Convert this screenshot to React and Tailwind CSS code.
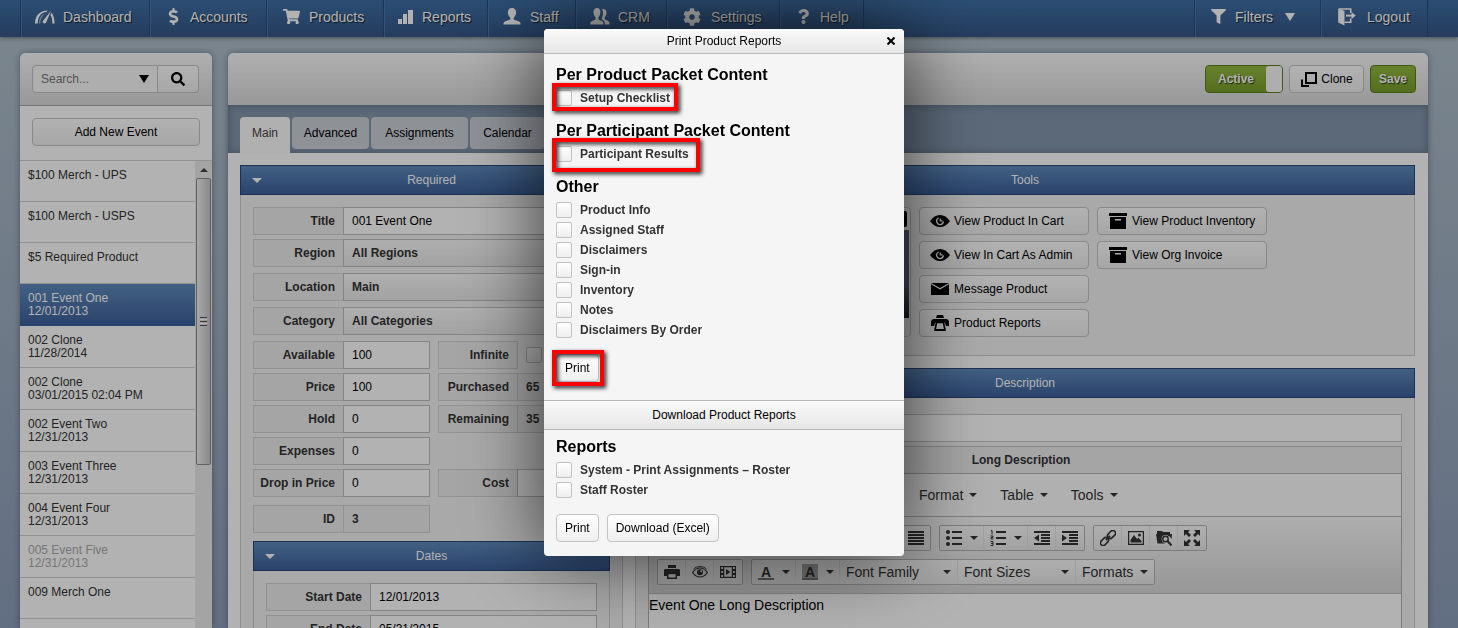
import React from "react";
import { FaDollarSign, FaShoppingCart, FaCog, FaQuestion, FaFilter, FaSearch } from "react-icons/fa";

/* ---------- icons ---------- */

const GaugeIcon = () => (
  <svg width="20" height="14" viewBox="0 0 20 14" fill="currentColor">
    <path d="M0 13.500C0 6 4.500.5 12.500.5l-.9 1.500C6 2.200 2.800 7 2.800 13.500z" />
    <path d="M4 13.500C4 8.500 6 5 9.200 4l-.8 1.400C6.500 7 5.400 9.800 5.400 13.500z" opacity="0.5" />
    <path d="M16 .8L8 10.800c-1.300 2 1.600 3.900 3 2 .4-.6.600-1.300.9-2z" />
    <path d="M16.500 2.800C18.600 5 19.600 9 19.600 13.500h-2.300C17.300 10 17 7 15.400 5z" />
  </svg>
);
const BarsIcon = () => (
  <svg width="16" height="16" viewBox="0 0 16 16" fill="currentColor">
    <rect x="0" y="10" width="4" height="5" />
    <rect x="5" y="5" width="4" height="10" />
    <rect x="10" y="1" width="5" height="14" />
  </svg>
);
const PersonIcon = () => (
  <svg width="18" height="17" viewBox="0 0 18 17" fill="currentColor">
    <path d="M9 0c2.800 0 4.200 1.900 4.100 4.500-.1 2.400-1.200 4.200-2.400 5.200v1.500c.5 1 5.300 1.600 6.300 3 .4.6.6 1.500.6 2.300H.4c0-.8.2-1.700.6-2.300 1-1.400 5.800-2 6.300-3V9.700C6.100 8.700 5 6.900 4.900 4.500 4.800 1.900 6.200 0 9 0z" />
  </svg>
);
const PeopleIcon = () => (
  <svg width="20" height="17" viewBox="0 0 20 17" fill="currentColor">
    <path d="M7 0c2.300 0 3.500 1.800 3.400 4.300-.1 2.200-.9 4-2 5v1.900c.6 1 4 1.500 4.700 2.900.3.600.4 1.500.4 2.300H.2c0-.8.1-1.700.5-2.300.7-1.300 4.100-2 4.800-2.900V9.300c-1.100-1-1.900-2.800-2-5C3.400 1.800 4.700 0 7 0z" />
    <path d="M12.300 1c2.700-.6 4.300 1.100 4.200 3.700-.1 2.100-.8 3.700-1.800 4.600v1.700c.5 1 3.700 1.600 4.400 2.900.3.600.5 1.700.5 2.500h-4.700c0-2-.5-3.400-1.800-4.100-.9-.5-1.200-.8-1.500-1.200v-.7c1.600-2 1.800-6.400.7-9.400z" />
  </svg>
);
const LogoutIcon = () => (
  <svg width="18" height="18" viewBox="0 0 18 18" fill="none" stroke="currentColor">
    <path d="M1 1h11.700v4M12.700 10.500v3.700H6.500" strokeWidth="1.600" />
    <path d="M.2.5l6.300 2.400V17.500L.2 14.500z" fill="currentColor" stroke="none" />
    <path d="M8 7.600h6.500" strokeWidth="2" />
    <path d="M13.500 4l4.200 3.600-4.200 3.600z" fill="currentColor" stroke="none" />
  </svg>
);
const CloneIcon = () => (
  <svg width="17" height="17" viewBox="0 0 17 17" fill="none" stroke="currentColor" strokeWidth="2">
    <rect x="6" y="2" width="10" height="10" />
    <path d="M2 8.500V15h7" />
  </svg>
);
const EyeIcon = () => (
  <svg width="20" height="12" viewBox="0 0 20 12">
    <path d="M0 6C3.200 2 6 0 10 0s6.800 2 10 6c-3.200 4-6 6-10 6S3.200 10 0 6z" fill="currentColor" />
    <path d="M8.700 3A3.400 3.400 0 1 0 13.400 6.400" fill="none" stroke="#f4f4f4" strokeWidth="1.300" />
    <path d="M10.300 3.500v2.300h2.200" fill="none" stroke="#f4f4f4" strokeWidth="1.200" />
  </svg>
);
const ArchiveIcon = () => (
  <svg width="18" height="16" viewBox="0 0 18 16" fill="currentColor">
    <path d="M0 0h18v3H0z" />
    <path fillRule="evenodd" d="M1 4h16v12H1zM6 6v1.500h6V6z" />
  </svg>
);
const MailIcon = () => (
  <svg width="18" height="12" viewBox="0 0 18 12" fill="currentColor">
    <path d="M0 0h18L9 5z" />
    <path d="M0 1.200l9 5.300 9-5.300V12H0z" />
  </svg>
);
const PrinterIcon = () => (
  <svg width="18" height="16" viewBox="0 0 18 16" fill="currentColor">
    <path d="M6 0h6l1 3H5z" />
    <path d="M2 4h14l2 2v5h-3L13.700 7.500H4.300L3 11H0V6z" />
    <path fillRule="evenodd" d="M4.800 7h8.400L15 16H3zM6.200 8.200L5.100 14h7.800l-1.100-5.800z" />
  </svg>
);
const Caret = ({ big }) =>
  big ? (
    <svg width="10" height="8" viewBox="0 0 10 8" fill="currentColor"><path d="M0 0h10L5 8z" /></svg>
  ) : (
    <svg width="8" height="4" viewBox="0 0 8 4" fill="currentColor"><path d="M0 0h8L4 4z" /></svg>
  );

const T = ({ children }) => (
  <svg width="16" height="16" viewBox="0 0 16 16" fill="currentColor" className="shrink-0">{children}</svg>
);
const lines = (d) => <path d={d} stroke="currentColor" strokeWidth="2" fill="none" />;
const tool = {
  undo: <T><path d="M6 1v3c6 0 9 3 9 10-2-4-4-5-9-5v3L0 6.500z" /></T>,
  redo: <T><path d="M10 1v3C4 4 1 7 1 14c2-4 4-5 9-5v3l6-5.500z" /></T>,
  bold: <b className="font-serif text-base">B</b>,
  italic: <i className="font-serif text-base">I</i>,
  underline: <u className="font-serif text-base">U</u>,
  left: <T>{lines("M0 2h16M0 5h10M0 8h16M0 11h10M0 14h16")}</T>,
  center: <T>{lines("M0 2h16M3 5h10M0 8h16M3 11h10M0 14h16")}</T>,
  right: <T>{lines("M0 2h16M6 5h10M0 8h16M6 11h10M0 14h16")}</T>,
  justify: <T>{lines("M0 2h16M0 5h16M0 8h16M0 11h16M0 14h16")}</T>,
  bullets: (
    <T>
      {lines("M6 2h10M6 8h10M6 14h10")}
      <circle cx="2" cy="2" r="2" /><circle cx="2" cy="8" r="2" /><circle cx="2" cy="14" r="2" />
    </T>
  ),
  numbers: (
    <T>
      {lines("M6 2h10M6 8h10M6 14h10")}
      <path d="M1 .5h1v4M.5 6h2.500v1.500h-2v1.500h2.500M.5 11.500h2.500v4h-2.500M1 13.500h2" fill="none" stroke="currentColor" />
    </T>
  ),
  outdent: <T>{lines("M0 2h16M7 5h9M7 8h9M7 11h9M0 14h16")}<path d="M5 4.500v7L0 8z" /></T>,
  indent: <T>{lines("M0 2h16M7 5h9M7 8h9M7 11h9M0 14h16")}<path d="M0 4.500v7L5 8z" /></T>,
  link: (
    <T>
      <g fill="none" stroke="currentColor" strokeWidth="1.600" transform="rotate(-45 8 8)">
        <rect x="-1.500" y="5.300" width="9" height="5.400" rx="2.700" />
        <rect x="8.500" y="5.300" width="9" height="5.400" rx="2.700" />
        <path d="M5 8h6" />
      </g>
    </T>
  ),
  image: (
    <T>
      <path fillRule="evenodd" d="M0 1h16v14H0zM1.200 2.200v11.600h13.600V2.200z" />
      <path d="M2.500 12.500V10L6 5l3 4 1.500-1.200 3 3.200v1.500z" /><circle cx="11.500" cy="5" r="1.500" />
    </T>
  ),
  browse: (
    <T>
      <path fillRule="evenodd" d="M1 1h5l1 1h7v2h2l-.6 6.500A4.200 4.200 0 1 0 9 13.500H1.500L0 4h1z" />
      <circle cx="9.500" cy="9" r="3.900" fill="#f0f0f0" />
      <circle cx="9.500" cy="9" r="2.700" fill="none" stroke="currentColor" strokeWidth="1.400" />
      <path d="M11.500 11l4 4.500" stroke="currentColor" strokeWidth="2" />
    </T>
  ),
  full: (
    <T>
      <path d="M0 0h6L4 2l3 3-2 2-3-3-2 2zM16 0v6l-2-2-3 3-2-2 3-3-2-2zM0 16v-6l2 2 3-3 2 2-3 3 2 2zM16 16h-6l2-2-3-3 2-2 3 3 2-2z" />
    </T>
  ),
  print: (
    <T>
      <path d="M4 1h8v3H4z" />
      <path fillRule="evenodd" d="M1 5h14l1 1v6h-3V9H3v3H0V6z" />
      <path fillRule="evenodd" d="M3 9h10v6H3zM4.500 10.200v3.300h7v-3.300z" />
    </T>
  ),
  preview: (
    <T>
      <path d="M.5 8.500C3 5 5.500 4 8 4s5 1 7.500 4.500C13 12 10.500 13 8 13S3 12 .5 8.500z" fill="none" stroke="currentColor" strokeWidth="1.200" />
      <path d="M1.500 5C5 1.800 11 1.800 14.500 5" fill="none" stroke="currentColor" />
      <circle cx="8" cy="8.200" r="3" /><circle cx="9" cy="7.200" r="1" fill="#e6e6e6" />
    </T>
  ),
  media: (
    <T>
      <path fillRule="evenodd" d="M0 2h16v12H0zM1.200 3v2H3V3zM1.200 7v2H3V7zM1.200 11v2H3v-2zM13 3v2h1.800V3zM13 7v2h1.800V7zM13 11v2h1.800v-2zM4.200 3.200v9.600h7.600V3.200z" />
      <path d="M6 5v6l4.500-3z" />
    </T>
  ),
};

/* ---------- shared class strings ---------- */

const btn =
  "rounded-[4px] border border-[#c4c4c4] bg-linear-to-b from-white to-[#efefef] text-xs text-black";
const blue = "bg-linear-to-b from-[#5f8bbd] to-[#3d609b]";
const lab = "flex shrink-0 items-center justify-end border border-[#d2d2d2] bg-[#ededed] pr-2 font-bold text-[#333]";
const checkbox =
  "size-4 shrink-0 appearance-none rounded-[2px] border border-[#c2c2c2] bg-linear-to-b from-white to-[#eeeeee]";

/* ---------- navigation ---------- */

const navItems = [
  ["Dashboard", <GaugeIcon />, "w-[129px]", "w-5"],
  ["Accounts", <FaDollarSign size={17} />, "w-[117px]", "w-[18px]"],
  ["Products", <FaShoppingCart size={17} />, "w-[117px]", "w-5"],
  ["Reports", <BarsIcon />, "w-[104px]", "w-4"],
  ["Staff", <PersonIcon />, "w-[88px]", "w-5"],
  ["CRM", <PeopleIcon />, "w-[91px]", "w-5"],
  ["Settings", <FaCog size={18} />, "w-[113px]", "w-[22px]"],
  ["Help", <FaQuestion size={15} />, "w-[84px]", "w-[18px]"],
];

const NavLink = ({ icon, label, width, iconWidth, children }) => (
  <a
    href="#"
    className={
      "flex items-center gap-2 border-l border-[#2c4c7c] pb-1 pl-[14px] shadow-[inset_1px_0_0_#4a78b0] " + width
    }
  >
    <span className={"flex justify-center " + iconWidth}>{icon}</span>
    {label}
    {children}
  </a>
);

const NavBar = () => (
  <nav className="flex h-[37px] shrink-0 justify-between bg-linear-to-b from-[#3f70a6] to-[#345787] pr-[30px] pl-5 text-sm text-white shadow-[0_1px_4px_rgba(0,0,0,0.4)] text-shadow-[1px_1px_1px_rgba(0,0,0,0.7)]">
    <div className="flex">
      {navItems.map(([label, icon, width, iconWidth]) => (
        <NavLink key={label} label={label} icon={icon} width={width} iconWidth={iconWidth} />
      ))}
      <span className="border-l border-[#2c4c7c]" />
    </div>
    <div className="flex">
      <NavLink label="Filters" icon={<FaFilter size={15} />} width="w-[126px]" iconWidth="w-[18px]">
        <span className="ml-1"><Caret big /></span>
      </NavLink>
      <NavLink label="Logout" icon={<LogoutIcon />} width="w-[108px] border-r" iconWidth="w-6" />
    </div>
  </nav>
);

/* ---------- sidebar ---------- */

const events = [
  ["$100 Merch - UPS"],
  ["$100 Merch - USPS"],
  ["$5 Required Product"],
  ["001 Event One", "12/01/2013"],
  ["002 Clone", "11/28/2014"],
  ["002 Clone", "03/01/2015 02:04 PM"],
  ["002 Event Two", "12/31/2013"],
  ["003 Event Three", "12/31/2013"],
  ["004 Event Four", "12/31/2013"],
  ["005 Event Five", "12/31/2013"],
  ["009 Merch One"],
  ["010 Merch Two"],
];

const Sidebar = () => (
  <aside className="flex w-48 shrink-0 flex-col overflow-hidden rounded-t-[6px] bg-white shadow-[0_0_6px_rgba(0,0,0,0.35)]">
    <div className="flex shrink-0 border-b border-[#a8a8a8] bg-linear-to-b from-[#fcfcfc] to-[#dadada] p-3">
      <div className="flex h-7 w-[126px] items-center rounded-l-[4px] border border-[#c4c4c4] bg-[#fafafa] pr-2">
        <input
          aria-label="Search"
          placeholder="Search..."
          className="min-w-0 flex-1 bg-transparent pl-2 outline-none placeholder:text-[#777]"
        />
        <button aria-label="Search options"><Caret big /></button>
      </div>
      <button
        aria-label="Search"
        className="flex h-7 w-[41px] items-center justify-center rounded-r-[4px] border border-l-0 border-[#c4c4c4] bg-linear-to-b from-white to-[#efefef]"
      >
        <FaSearch size={14} />
      </button>
    </div>
    <div className="shrink-0 p-3 pb-[14px]">
      <button className={"h-7 w-full " + btn}>Add New Event</button>
    </div>
    <div className="flex min-h-0 flex-1 border-t border-[#d0d0d0]">
      <ul className="min-w-0 flex-1 overflow-hidden">
        {events.map(([name, date], i) => (
          <li key={i}>
            <a
              href="#"
              className={
                "block border-b px-2 pt-2 leading-[13px] " +
                (date ? "h-[42px] " : "h-[41px] ") +
                (i === 3
                  ? "border-[#3d609b] text-white " + blue
                  : i === 9
                    ? "border-[#d0d0d0] text-[#aaa]"
                    : "border-[#d0d0d0] text-[#333]")
              }
            >
              {name}
              {date && <><br />{date}</>}
            </a>
          </li>
        ))}
      </ul>
      <div className="flex w-[17px] flex-col items-center bg-[#ebebeb]">
        <span className="flex h-[17px] items-center text-[#444]">
          <svg width="8" height="4" viewBox="0 0 8 4" fill="currentColor"><path d="M4 0l4 4H0z" /></svg>
        </span>
        <div className="flex h-[287px] w-[15px] flex-col items-center justify-center gap-px rounded-[2px] border border-[#8c8c8c] bg-linear-to-r from-[#f2f2f2] via-[#dcdcdc] to-[#c4c4c8]">
          <i className="h-px w-[7px] bg-[#555]" />
          <i className="h-px w-[7px] bg-[#fff]" />
          <i className="h-px w-[7px] bg-[#555]" />
          <i className="h-px w-[7px] bg-[#fff]" />
          <i className="h-px w-[7px] bg-[#555]" />
        </div>
      </div>
    </div>
  </aside>
);

/* ---------- form ---------- */

const Field = ({ id, label, labelWidth = "w-[91px]", className = "", kind = "input", value }) => (
  <div className={"flex h-7 shrink-0 " + className}>
    <label htmlFor={id} className={lab + " " + labelWidth}>{label}</label>
    {kind === "input" && (
      <input
        id={id}
        defaultValue={value}
        className="-ml-px min-w-0 flex-1 border border-[#bebebe] bg-white px-2 text-black outline-none"
      />
    )}
    {kind === "select" && (
      <select
        id={id}
        className="-ml-px min-w-0 flex-1 appearance-none border border-[#bebebe] bg-linear-to-b from-[#fbfbfb] to-[#e9e9e9] px-2 font-bold text-[#333]"
      >
        <option>{value}</option>
      </select>
    )}
    {kind === "output" && (
      <output
        id={id}
        className="-ml-px flex min-w-0 flex-1 items-center border border-[#d2d2d2] bg-[#ededed] px-2 font-bold text-[#333]"
      >
        {value}
      </output>
    )}
    {kind === "check" && <input id={id} type="checkbox" className={"mt-[6px] ml-2 " + checkbox} />}
  </div>
);

const SectionHead = ({ children, toggle }) => (
  <h2
    className={
      "grid h-[30px] shrink-0 grid-cols-[1fr_auto_1fr] items-center border border-[#2b4777] px-[11px] text-white " + blue
    }
  >
    <span>
      {toggle && (
        <button aria-label={"Collapse " + children} className="block">
          <svg width="10" height="5" viewBox="0 0 10 5" fill="currentColor"><path d="M0 0h10L5 5z" /></svg>
        </button>
      )}
    </span>
    {children}
  </h2>
);

const half = "w-[177px]";
const second = "ml-2 flex-1";
const w80 = "w-20";

const Required = () => (
  <section className="flex w-[383px] shrink-0 flex-col">
    <SectionHead toggle>Required</SectionHead>
    <div className="flex-1 border-x border-[#cccccc] bg-[#f3f3f3] p-3">
      <Field id="title" label="Title" value="001 Event One" className="mb-1" />
      <div className="mb-[6px] flex flex-col gap-[6px]">
        <Field id="region" label="Region" kind="select" value="All Regions" />
        <Field id="location" label="Location" kind="select" value="Main" />
        <Field id="category" label="Category" kind="select" value="All Categories" />
      </div>
      <div className="flex flex-col gap-1">
        <div className="flex">
          <Field id="available" label="Available" value="100" className={half} />
          <Field id="infinite" label="Infinite" kind="check" labelWidth={w80} className={second} />
        </div>
        <div className="flex">
          <Field id="price" label="Price" value="100" className={half} />
          <Field id="purchased" label="Purchased" kind="output" value="65" labelWidth={w80} className={second} />
        </div>
        <div className="flex">
          <Field id="hold" label="Hold" value="0" className={half} />
          <Field id="remaining" label="Remaining" kind="output" value="35" labelWidth={w80} className={second} />
        </div>
        <Field id="expenses" label="Expenses" value="0" className={half} />
        <div className="flex">
          <Field id="dropin" label="Drop in Price" value="0" className={half} />
          <Field id="cost" label="Cost" value="" labelWidth={w80} className={second} />
        </div>
      </div>
      <Field id="id" label="ID" kind="output" value="3" className={"my-2 " + half} />
      <SectionHead toggle>Dates</SectionHead>
      <div className="flex flex-col gap-1 border border-t-0 border-[#cccccc] p-3">
        <Field id="start" label="Start Date" value="12/01/2013" labelWidth="w-[105px]" />
        <Field id="end" label="End Date" value="05/31/2015" labelWidth="w-[105px]" />
      </div>
    </div>
  </section>
);

const ToolButton = ({ icon, children }) => (
  <button className={"flex h-7 w-[170px] items-center gap-1 pl-[10px] " + btn}>
    <span className="flex w-5 justify-center">{icon}</span>
    {children}
  </button>
);

const Tools = () => (
  <section>
    <SectionHead>Tools</SectionHead>
    <div className="flex gap-2 border border-t-0 border-[#cccccc] bg-[#f3f3f3] px-3 pt-3 pb-[18px]">
      <div className={"flex w-[263px] flex-col items-end pt-[3px] pr-px " + btn}>
        <span className="mr-[2px] h-4 w-20 rounded-[2px] bg-black" />
        <span className="mt-[3px] h-[88px] w-full bg-linear-to-b from-[#5a6172] from-60% to-[#1c1f2a]" />
      </div>
      <div className="flex flex-col gap-[6px]">
        <ToolButton icon={<EyeIcon />}>View Product In Cart</ToolButton>
        <ToolButton icon={<EyeIcon />}>View In Cart As Admin</ToolButton>
        <ToolButton icon={<MailIcon />}>Message Product</ToolButton>
        <ToolButton icon={<PrinterIcon />}>Product Reports</ToolButton>
      </div>
      <div className="flex flex-col gap-[6px]">
        <ToolButton icon={<ArchiveIcon />}>View Product Inventory</ToolButton>
        <ToolButton icon={<ArchiveIcon />}>View Org Invoice</ToolButton>
      </div>
    </div>
  </section>
);

/* ---------- rich text editor ---------- */

const Group = ({ children }) => (
  <div className="flex h-[26px] divide-x divide-[#e4e4e4] rounded-[2px] border border-[#b4b4b4] bg-linear-to-b from-[#fbfbfb] to-[#e8e8e8]">
    {children}
  </div>
);
const Icon = ({ name, drop }) => (
  <button
    aria-label={name}
    className={"flex items-center gap-2 " + (drop ? "w-11 pl-[6px]" : "w-7 justify-center")}
  >
    {tool[name]}
    {drop && <Caret />}
  </button>
);
const ColorButton = ({ label, fill }) => (
  <button aria-label={label} className="flex w-11 items-center gap-2 pl-[6px]">
    <span
      className={
        "flex size-4 shrink-0 justify-center border-b-2 border-[#777] text-sm leading-4 font-bold " +
        (fill ? "bg-[#a8a8a8]" : "")
      }
    >
      A
    </span>
    <Caret />
  </button>
);
const TextDrop = ({ children, width }) => (
  <button className={"flex items-center justify-between px-[6px] " + width}>
    {children}
    <Caret />
  </button>
);

const Description = () => (
  <section className="mt-3 flex flex-1 flex-col">
    <SectionHead>Description</SectionHead>
    <div className="flex flex-1 flex-col border-x border-[#cccccc] bg-[#f3f3f3] px-3 pt-4">
      <input aria-label="Short Description" className="h-7 border border-[#c6c6c6] bg-white px-2" />
      <label
        htmlFor="long"
        className="mt-1 flex h-[27px] shrink-0 items-center justify-center border border-b-0 border-[#c6c6c6] bg-[#ededed] pr-2 font-bold text-[#333]"
      >
        Long Description
      </label>
      <div className="flex flex-1 flex-col border border-[#b4b4b4] text-sm text-[#333]">
        <div className="flex h-[43px] shrink-0 items-center gap-[23px] border-b border-[#b8b8b8] bg-[#fcfcfc] pl-4">
          <div className="flex w-[231px] gap-[23px]">
            {["File", "Edit", "View"].map((m) => (
              <button key={m} className="flex items-center gap-[6px]">{m}<Caret /></button>
            ))}
          </div>
          {["Format", "Table", "Tools"].map((m) => (
            <button key={m} className="flex items-center gap-[6px]">{m}<Caret /></button>
          ))}
        </div>
        <div className="flex shrink-0 flex-col gap-2 border-b border-[#bcbcbc] bg-linear-to-b from-[#fafafa] to-[#d9d9d9] p-2">
          <div className="flex gap-2">
            <Group><Icon name="undo" /><Icon name="redo" /></Group>
            <Group><Icon name="bold" /><Icon name="italic" /><Icon name="underline" /></Group>
            <Group><Icon name="left" /><Icon name="center" /><Icon name="right" /><Icon name="justify" /></Group>
            <Group><Icon name="bullets" drop /><Icon name="numbers" drop /><Icon name="outdent" /><Icon name="indent" /></Group>
            <Group><Icon name="link" /><Icon name="image" /><Icon name="browse" /><Icon name="full" /></Group>
          </div>
          <div className="flex gap-2">
            <Group><Icon name="print" /><Icon name="preview" /><Icon name="media" /></Group>
            <Group>
              <ColorButton label="Text color" />
              <ColorButton label="Background color" fill />
              <TextDrop width="w-[118px]">Font Family</TextDrop>
              <TextDrop width="w-[118px]">Font Sizes</TextDrop>
              <TextDrop width="w-[78px]">Formats</TextDrop>
            </Group>
          </div>
        </div>
        <textarea
          id="long"
          defaultValue="Event One Long Description"
          className="min-h-24 flex-1 resize-none bg-white pt-px text-black outline-none"
        />
      </div>
    </div>
  </section>
);

/* ---------- main panel ---------- */

const green =
  "rounded-[4px] border border-[#5a8117] bg-linear-to-b from-[#94bb40] to-[#789d2c] font-bold text-white text-shadow-[1px_1px_1px_rgba(0,0,0,0.7)]";

const MainPanel = () => (
  <main className="flex min-w-0 flex-1 flex-col rounded-t-[6px] bg-white shadow-[0_0_6px_rgba(0,0,0,0.35)]">
    <div className="flex shrink-0 justify-end gap-[6px] rounded-t-[6px] bg-linear-to-b from-[#fcfcfc] to-[#dadada] p-3">
      <button aria-pressed="true" className={"flex h-7 w-[78px] items-stretch " + green}>
        <span className="flex flex-1 items-center justify-center">Active</span>
        <span className="w-4 rounded-[3px] bg-[#fafafa]" />
      </button>
      <button className={"flex h-7 w-[75px] items-center justify-center gap-1 " + btn}>
        <CloneIcon />Clone
      </button>
      <button className={"h-7 w-[46px] " + green}>Save</button>
    </div>
    <div
      role="tablist"
      className="flex h-12 shrink-0 gap-[2px] bg-[#8497ae] px-3 pt-3 shadow-[inset_0_0_8px_rgba(0,0,0,0.25)]"
    >
      <button role="tab" aria-selected="true" className="h-9 w-[50px] rounded-t-[4px] bg-[#fcfcfc] pb-1 text-[#444]">
        Main
      </button>
      <button role="tab" className="h-8 w-[77px] rounded-[4px] bg-[#ccd1d9]">Advanced</button>
      <button role="tab" className="h-8 w-[97px] rounded-[4px] bg-[#ccd1d9]">Assignments</button>
      <button role="tab" className="h-8 w-[75px] rounded-[4px] bg-[#ccd1d9]">Calendar</button>
    </div>
    <div className="flex min-h-0 flex-1 gap-3 pt-3 pr-[13px] pl-3">
      <Required />
      <div className="flex min-w-0 flex-1 flex-col">
        <Tools />
        <Description />
      </div>
    </div>
  </main>
);

/* ---------- dialog ---------- */

const Highlight = ({ className }) => (
  <span
    className={
      "pointer-events-none absolute border-4 border-[#fe0000] drop-shadow-[2px_2px_2px_rgba(0,0,0,0.9)] " + className
    }
  />
);

const Check = ({ id, label, children }) => (
  <div className="relative flex h-5 items-center gap-2">
    <input id={id} type="checkbox" className={checkbox} />
    <label htmlFor={id} className="font-bold text-[#333]">{label}</label>
    {children}
  </div>
);

const dialogHead = "relative flex items-center justify-center border-[#b8b8b8] bg-linear-to-b from-[#fafafa] to-[#e6e6e6]";
const dialogTitle = "mb-[3px] text-base leading-5 font-bold text-black";
const others = ["Product Info", "Assigned Staff", "Disclaimers", "Sign-in", "Inventory", "Notes", "Disclaimers By Order"];

const Dialog = () => (
  <div className="fixed inset-0 flex items-start justify-center bg-black/30 pt-[29px] pr-[10px]">
    <div
      role="dialog"
      aria-label="Print Product Reports"
      className="w-[360px] rounded-[4px] bg-[#f5f5f5] shadow-[0_0_80px_rgba(0,0,0,0.7)]"
    >
      <div className={"h-[25px] rounded-t-[4px] border-b " + dialogHead}>
        Print Product Reports
        <button aria-label="Close" className="absolute right-[9px]">
          <svg width="8" height="8" viewBox="0 0 8 8" stroke="currentColor" strokeWidth="2"><path d="M.5.5l7 7M7.500.5l-7 7" /></svg>
        </button>
      </div>
      <form className="px-3 pt-[11px] pb-[18px]">
        <h3 className={dialogTitle}>Per Product Packet Content</h3>
        <Check id="setup" label="Setup Checklist">
          <Highlight className="-top-[5px] -left-1 h-7 w-[126px]" />
        </Check>
        <h3 className={"mt-[13px] " + dialogTitle}>Per Participant Packet Content</h3>
        <Check id="results" label="Participant Results">
          <Highlight className="-top-[6px] -left-1 h-[34px] w-[148px]" />
        </Check>
        <h3 className={"mt-[13px] " + dialogTitle}>Other</h3>
        {others.map((o) => (
          <Check key={o} id={o} label={o} />
        ))}
        <div className="relative mt-[14px]">
          <button type="button" className={"h-7 px-2 " + btn}>Print</button>
          <Highlight className="-top-1 -left-1 h-9 w-[52px]" />
        </div>
      </form>
      <div className={"h-[30px] border-y " + dialogHead}>Download Product Reports</div>
      <form className="px-3 pt-[7px] pb-[14px]">
        <h3 className={dialogTitle}>Reports</h3>
        <Check id="roster" label="System - Print Assignments – Roster" />
        <Check id="staff" label="Staff Roster" />
        <div className="mt-[14px] flex gap-2">
          <button type="button" className={"h-7 px-2 " + btn}>Print</button>
          <button type="button" className={"h-7 px-2 " + btn}>Download (Excel)</button>
        </div>
      </form>
    </div>
  </div>
);

export default function App() {
  return (
    <div className="flex h-screen flex-col overflow-hidden bg-linear-to-b from-[#b1c0cb] to-[#8d9fba] font-['Liberation_Sans',Arial,sans-serif] text-xs text-black">
      <NavBar />
      <div className="flex min-h-0 flex-1 gap-4 pt-4 pr-[30px] pl-5">
        <Sidebar />
        <MainPanel />
      </div>
      <Dialog />
    </div>
  );
}
